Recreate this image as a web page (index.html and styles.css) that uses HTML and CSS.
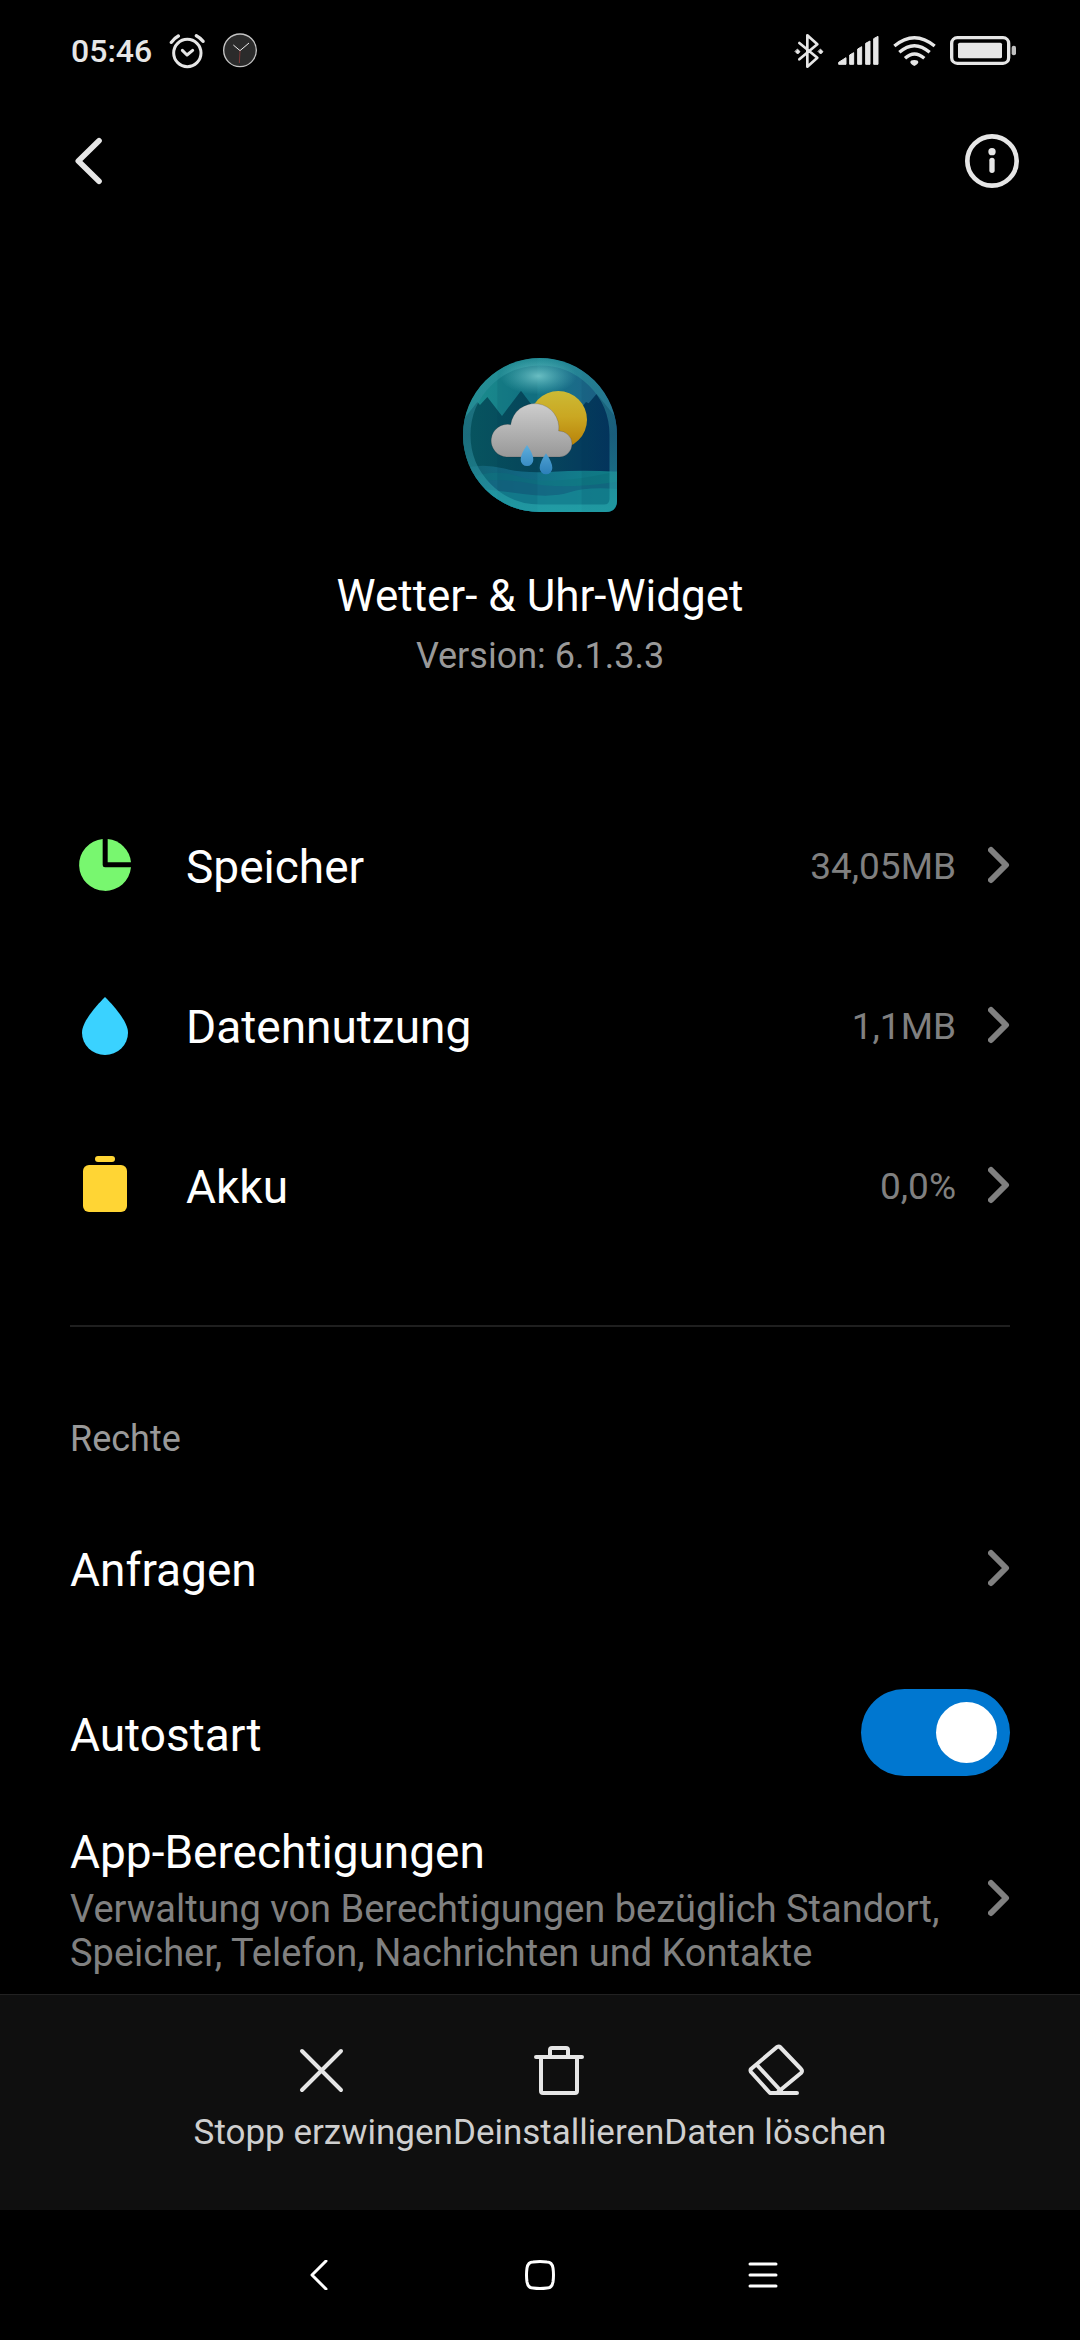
FILE: index.html
```html
<!DOCTYPE html>
<html lang="de">
<head>
    <meta charset="UTF-8">
    <meta name="viewport" content="width=device-width, initial-scale=1.0">
    <title>App-Info</title>
    <link rel="stylesheet" href="styles.css">
</head>
<body>

<!-- Status Bar -->
<div class="statusbar">
    <div class="status-left">
        <span class="time">05:46</span>
        <svg width="36" height="36" viewBox="356 69 108 108" fill="none" stroke="#e6e6e6" stroke-width="9" stroke-linecap="round" stroke-linejoin="round">
            <circle cx="411" cy="129" r="41"/>
            <path d="M396 121l14 14 17-14" />
            <path d="M363 97q8-12 21-19M458 94q-8-11-20-17" stroke-width="10"/>
        </svg>
        <svg width="36" height="36" viewBox="514 69 108 108" fill="none">
            <circle cx="568" cy="121" r="49" fill="#2b2b2b" stroke="#c4c4c4" stroke-width="4"/>
            <path d="M548 105l20 17 27-23" stroke="#eee" stroke-width="3"/>
            <path d="M568 122l-2 37" stroke="#a33b3b" stroke-width="2"/>
        </svg>
    </div>
    <div class="status-right">
        <svg width="30" height="36" viewBox="69 69 90 108" fill="none" stroke="#e6e6e6" stroke-width="8" stroke-linecap="round" stroke-linejoin="round">
            <path d="M85 99l54 44-30 27V76l30 27-54 45"/>
            <path d="M80 118l7 7-7 7-7-7zM149 118l7 7-7 7-7-7z" fill="#e6e6e6" stroke-width="3"/>
        </svg>
        <svg width="41" height="36" viewBox="200 69 123 108" fill="#e6e6e6" stroke="#e6e6e6" stroke-width="3" stroke-linejoin="round">
            <path d="M202 163v-6l22-14v20zM235 163v-28l12-7v35zM259 163v-46l12-7v53zM283 163v-63l13-7v70zM307 163v-77l13-7v84z"/>
        </svg>
        <svg width="43" height="36" viewBox="368 69 129 108" fill="none" stroke="#e6e6e6" stroke-width="10">
            <path d="M372 108q60-50 121 0M387 127q45-40 91 0M404 145q28-26 58 0"/>
            <path d="M420 157q0-7 12-7t12 7q0 5-12 11-12-6-12-11z" fill="#e6e6e6" stroke="none"/>
        </svg>
        <svg width="67" height="36" viewBox="540 69 201 108" fill="none">
            <rect x="545" y="83" width="171" height="77" rx="17" stroke="#e6e6e6" stroke-width="10"/>
            <rect x="564" y="98" width="132" height="47" rx="5" fill="#e6e6e6"/>
            <rect x="725" y="107" width="13" height="29" rx="6" fill="#c0c0c0"/>
        </svg>
    </div>
</div>

<!-- Header -->
<header class="header">
    <button class="icon-btn" aria-label="Zurück">
        <svg width="36" height="54" viewBox="68 372 108 162" fill="none" stroke="#e6e6e6" stroke-width="17" stroke-linecap="round" stroke-linejoin="round">
            <path d="M146 392L84 453l62 61"/>
        </svg>
    </button>
    <button class="icon-btn" aria-label="Info">
        <svg width="54" height="54" viewBox="585 372 162 162" fill="none">
            <circle cx="666" cy="453" r="74" stroke="#e6e6e6" stroke-width="14"/>
            <circle cx="666" cy="425" r="11" fill="#e6e6e6"/>
            <rect x="658" y="443" width="16" height="46" rx="8" fill="#e6e6e6"/>
        </svg>
    </button>
</header>

<main>
    <!-- App -->
    <section class="app">
        <svg width="154" height="154" viewBox="69 54 462 462">
            <defs>
                <linearGradient id="sky" x1="0" y1="0" x2="1" y2="0">
                    <stop offset="0" stop-color="#1c8f8e"/>
                    <stop offset=".45" stop-color="#137786"/>
                    <stop offset="1" stop-color="#21608b"/>
                </linearGradient>
                <linearGradient id="hills" x1="0" y1="0" x2="1" y2="0">
                    <stop offset="0" stop-color="#07555f"/>
                    <stop offset=".5" stop-color="#06475c"/>
                    <stop offset="1" stop-color="#04335e"/>
                </linearGradient>
                <linearGradient id="water" x1="0" y1="0" x2="1" y2="0">
                    <stop offset="0" stop-color="#10606e"/>
                    <stop offset=".35" stop-color="#136a86"/>
                    <stop offset="1" stop-color="#11878d"/>
                </linearGradient>
                <linearGradient id="sun" x1="0" y1="0" x2="0" y2="1">
                    <stop offset="0" stop-color="#ccba34"/>
                    <stop offset=".45" stop-color="#caa722"/>
                    <stop offset="1" stop-color="#b67e06"/>
                </linearGradient>
                <linearGradient id="cloud" x1="0" y1="0" x2="0" y2="1">
                    <stop offset="0" stop-color="#cdcdcd"/>
                    <stop offset="1" stop-color="#989898"/>
                </linearGradient>
                <linearGradient id="drop" x1="0" y1="0" x2="0" y2="1">
                    <stop offset="0" stop-color="#5eaedd"/>
                    <stop offset="1" stop-color="#2b7fb9"/>
                </linearGradient>
                <linearGradient id="rim" x1="0" y1="0" x2="0" y2="1">
                    <stop offset="0" stop-color="#2d9ba0"/>
                    <stop offset=".5" stop-color="#2c7f94"/>
                    <stop offset="1" stop-color="#2bb0b3"/>
                </linearGradient>
                <radialGradient id="shine">
                    <stop offset="0" stop-color="#7fd0d2" stop-opacity=".8"/>
                    <stop offset="1" stop-color="#5fc0c4" stop-opacity="0"/>
                </radialGradient>
                <clipPath id="badge">
                    <path d="M300 54a231 231 0 0 1 231 231v196q0 35-35 35H300a231 231 0 0 1 0-462z"/>
                </clipPath>
            </defs>
            <g clip-path="url(#badge)">
                <rect x="69" y="54" width="462" height="462" fill="url(#sky)"/>
                <path d="M69 240l43-54 8 9 22-24 44 57 57-76 60 80 100-5 35-41 8 4 24-29 61 75v170H69z" fill="url(#hills)"/>
                <path d="M69 385q60-16 120 0t150 10 192 0v121H69z" fill="url(#water)"/>
                <path d="M69 425q80-45 170-15t292-16v122H69z" fill="#0f7580" opacity=".55"/>
                <path d="M69 430q100-20 200 0t262-5v91H69z" fill="#165f84" opacity=".5"/>
                <path d="M69 440q90 10 180 22t140-5 142-10v69H69z" fill="#18a0a2" opacity=".45"/>
                <path d="M172 54h120v462H172zM425 54h106v462H425z" fill="#04304f" opacity=".1"/>
                <path d="M300 65a220 220 0 0 1 220 220v192q0 28-28 28H300a220 220 0 0 1 0-440z" fill="none" stroke="url(#rim)" stroke-width="23" opacity=".55"/>
                <ellipse cx="295" cy="108" rx="115" ry="56" fill="url(#shine)"/>
            </g>
            <circle cx="355" cy="239" r="86" fill="url(#sun)"/>
            <path d="M200 351a49 49 0 1 1 12-97 72 72 0 1 1 144 19 39 39 0 1 1 2 78z" fill="url(#cloud)" stroke="#222" stroke-opacity=".3" stroke-width="2"/>
            <path d="M261 315q19 27 19 44a19 19 0 0 1-38 0q0-17 19-44zM318 340q19 27 19 44a19 19 0 0 1-38 0q0-17 19-44z" fill="url(#drop)"/>
        </svg>
        <h1>Wetter- &amp; Uhr-Widget</h1>
        <p class="version">Version: 6.1.3.3</p>
    </section>

    <!-- Usage -->
    <section class="usage">
        <a class="row usage-row" href="#">
            <svg width="70" height="70" viewBox="60 60 210 210" fill="#78f76f">
                <path d="M158 87a78 78 0 1 0 85 85h-78q-7 0-7-7z"/>
                <path d="M173 87a78 78 0 0 1 70 70h-70z"/>
            </svg>
            <span class="label">Speicher</span>
            <span class="value">34,05MB</span>
            <svg class="chevron" width="22" height="38" viewBox="0 0 22 38"><path d="M3 4l15 15L3 34"/></svg>
        </a>
        <a class="row usage-row" href="#">
            <svg width="70" height="70" viewBox="60 540 210 210" fill="#3ad2ff">
                <path d="M165 561c26 26 69 74 69 107a69 67 0 0 1-138 0c0-33 43-81 69-107z"/>
            </svg>
            <span class="label">Datennutzung</span>
            <span class="value">1,1MB</span>
            <svg class="chevron" width="22" height="38" viewBox="0 0 22 38"><path d="M3 4l15 15L3 34"/></svg>
        </a>
        <a class="row usage-row" href="#">
            <svg width="70" height="70" viewBox="60 1020 210 210" fill="#ffd534">
                <rect x="135" y="1038" width="60" height="18" rx="9"/>
                <rect x="99" y="1065" width="132" height="141" rx="18"/>
            </svg>
            <span class="label">Akku</span>
            <span class="value">0,0%</span>
            <svg class="chevron" width="22" height="38" viewBox="0 0 22 38"><path d="M3 4l15 15L3 34"/></svg>
        </a>
    </section>

    <hr class="divider">

    <!-- Permissions -->
    <section class="permissions">
        <h2>Rechte</h2>
        <a class="row" href="#">
            <span class="label">Anfragen</span>
            <svg class="chevron" width="22" height="38" viewBox="0 0 22 38"><path d="M3 4l15 15L3 34"/></svg>
        </a>
        <div class="row">
            <label class="label" for="autostart">Autostart</label>
            <input type="checkbox" id="autostart" class="switch" checked>
        </div>
        <a class="row" href="#">
            <span class="label">App-Berechtigungen
                <span class="summary">Verwaltung von Berechtigungen bezüglich Standort, Speicher, Telefon, Nachrichten und Kontakte</span>
            </span>
            <svg class="chevron" width="22" height="38" viewBox="0 0 22 38"><path d="M3 4l15 15L3 34"/></svg>
        </a>
    </section>
</main>

<!-- Action Bar -->
<div class="actions">
    <button class="action">
        <svg width="60" height="60" viewBox="0 0 60 60"><path d="M9 10l39 39M48 10L9 49"/></svg>
        Stopp erzwingen
    </button>
    <button class="action">
        <svg width="60" height="60" viewBox="0 0 60 60"><path d="M7 16h46M12 16v34q0 2 2 2h32q2 0 2-2V16M21 15V9q0-2 2-2h14q2 0 2 2v6"/></svg>
        Deinstallieren
    </button>
    <button class="action">
        <svg width="60" height="60" viewBox="0 0 60 60"><path d="M52 52H25L6 31q-1-2 0-3L32 6q2-1 3 0l21 22q2 2 0 4L33 51M12 24l24 26"/></svg>
        Daten löschen
    </button>
</div>

<!-- System Navigation -->
<nav class="navbar">
    <button class="nav-btn" aria-label="Zurück">
        <svg width="30" height="30" viewBox="0 0 30 30"><path d="M24 1L10 15l14 14"/></svg>
    </button>
    <button class="nav-btn" aria-label="Startseite">
        <svg width="30" height="30" viewBox="0 0 30 30"><path d="M8 2q7-1 14 0 5 0 6 6 1 7 0 14-1 6-6 6-7 1-14 0-5 0-6-6-1-7 0-14 1-6 6-6z"/></svg>
    </button>
    <button class="nav-btn" aria-label="Letzte Apps">
        <svg width="30" height="30" viewBox="0 0 30 30"><path d="M2 4h26M2 15h26M2 26h26"/></svg>
    </button>
</nav>

</body>
</html>
```

FILE: styles.css
```css
* {
    box-sizing: border-box;
}
body {
    font-family: Roboto, "Liberation Sans", sans-serif;
    background-color: #000;
    color: #fff;
    margin: 0;
    min-height: 100vh;
    display: flex;
    flex-direction: column;
}
svg {
    display: block;
    flex-shrink: 0;
}
button {
    background: none;
    border: none;
    padding: 0;
    font-family: inherit;
    cursor: pointer;
}
main {
    flex: 1;
}

/* Status bar */
.statusbar {
    display: flex;
    justify-content: space-between;
    align-items: center;
    height: 102px;
    padding: 0 63px 0 71px;
}
.status-left {
    display: flex;
    align-items: center;
    gap: 17px;
}
.status-right {
    display: flex;
    align-items: center;
    gap: 14px;
}
.time {
    font-size: 32px;
    font-weight: 500;
    color: #e6e6e6;
}

/* Header */
.header {
    display: flex;
    justify-content: space-between;
    align-items: center;
    height: 118px;
    padding: 0 61px 0 73px;
}

/* App */
.app {
    display: flex;
    flex-direction: column;
    align-items: center;
    padding: 138px 70px 107px;
}
.app h1 {
    font-size: 44px;
    font-weight: normal;
    line-height: 52px;
    margin: 58px 0 12px;
}
.version {
    font-size: 36px;
    line-height: 44px;
    color: #999;
    margin: 0;
}

/* Rows */
.row {
    display: flex;
    align-items: center;
    min-height: 165px;
    padding: 0 70px;
    color: #fff;
    text-decoration: none;
}
.usage-row {
    min-height: 160px;
}
.label {
    flex: 1;
    font-size: 46px;
    line-height: 54px;
    padding-top: 4px;
}
.usage-row .label {
    margin-left: 46px;
}
.value {
    font-size: 37px;
    line-height: 44px;
    padding-top: 4px;
    color: #808080;
}
.summary {
    display: block;
    font-size: 38px;
    line-height: 44px;
    margin-top: 8px;
    color: #808080;
}
.chevron {
    margin-left: 32px;
    fill: none;
    stroke: #808080;
    stroke-width: 6;
    stroke-linecap: round;
    stroke-linejoin: round;
}
.divider {
    height: 2px;
    border: none;
    background-color: #1f1f1f;
    margin: 60px 70px 0;
}
.permissions h2 {
    font-size: 36px;
    font-weight: normal;
    line-height: 44px;
    color: #999;
    margin: 0;
    padding: 90px 70px 24px;
}

/* Switch */
.switch {
    appearance: none;
    display: flex;
    align-items: center;
    width: 149px;
    height: 87px;
    margin: 0;
    padding: 0 13px;
    border-radius: 44px;
    background-color: #333;
    cursor: pointer;
}
.switch::before {
    content: "";
    width: 61px;
    height: 61px;
    border-radius: 50%;
    background-color: #fff;
}
.switch:checked {
    justify-content: flex-end;
    background-color: #0077d0;
}

/* Action bar */
.actions {
    display: flex;
    justify-content: center;
    padding: 46px 0 57px;
    background-color: #0f0f0f;
    border-top: 1px solid #222;
}
.action {
    display: flex;
    flex-direction: column;
    align-items: center;
    gap: 12px;
    font-size: 35px;
    line-height: 40px;
    white-space: nowrap;
    color: #cfcfcf;
}
.action svg {
    fill: none;
    stroke: #e6e6e6;
    stroke-width: 4;
    stroke-linecap: round;
    stroke-linejoin: round;
}

/* System navigation */
.navbar {
    display: flex;
    justify-content: center;
    height: 130px;
}
.nav-btn {
    display: flex;
    justify-content: center;
    align-items: center;
    width: 223px;
}
.nav-btn svg {
    fill: none;
    stroke: #fff;
    stroke-width: 3;
    stroke-linecap: round;
    stroke-linejoin: round;
}
```
